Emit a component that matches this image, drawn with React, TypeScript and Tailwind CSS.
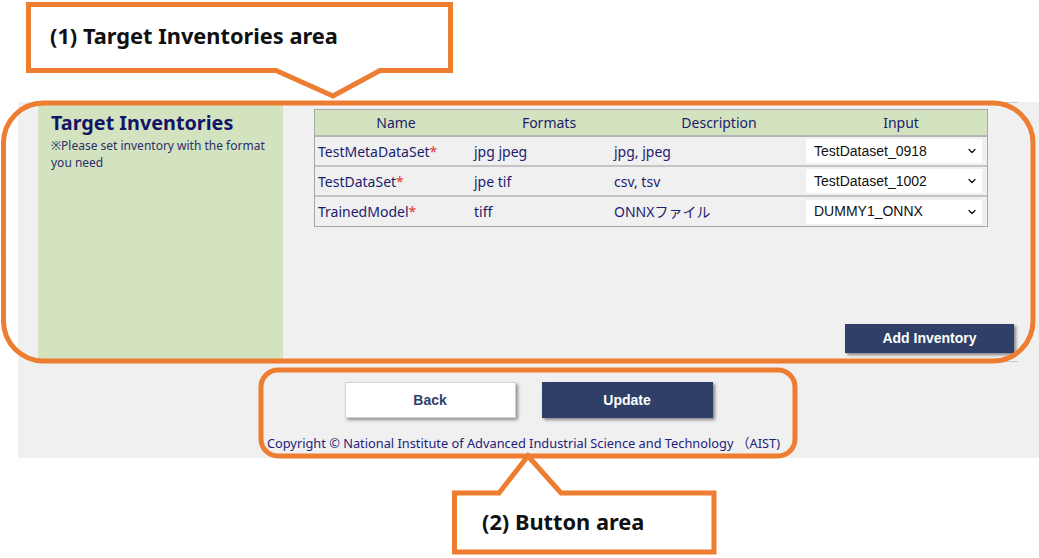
import { ChevronDown } from "lucide-react";

type Inventory = {
  name: string;
  formats: string;
  description: string;
  input: string;
};

const inventories: Inventory[] = [
  { name: "TestMetaDataSet", formats: "jpg jpeg", description: "jpg, jpeg", input: "TestDataset_0918" },
  { name: "TestDataSet", formats: "jpe tif", description: "csv, tsv", input: "TestDataset_1002" },
  { name: "TrainedModel", formats: "tiff", description: "ONNXファイル", input: "DUMMY1_ONNX" },
];

const ORANGE = "#ed7d31";

function Annotations() {
  return (
    <>
      <svg className="absolute inset-0 pointer-events-none" width="1039" height="558" viewBox="0 0 1039 558">
        <path
          d="M28.5 4.5 H450.5 V70.5 H380 L333 96 L276 70.5 H28.5 Z"
          fill="#ffffff"
          stroke={ORANGE}
          strokeWidth="5"
        />
        <rect x="3.5" y="103" width="1029.5" height="258" rx="40" fill="none" stroke={ORANGE} strokeWidth="5" />
        <rect x="261" y="370" width="534" height="86" rx="17" fill="none" stroke={ORANGE} strokeWidth="5" />
        <path
          d="M454.5 493 H499 L528 456 L561 493 H714 V552 H454.5 Z"
          fill="#ffffff"
          stroke={ORANGE}
          strokeWidth="5"
        />
      </svg>
      <div className="absolute left-[50px] top-[21px] text-[21.8px] font-bold leading-[30px] text-[#111] font-['Noto_Sans',sans-serif]">
        (1) Target Inventories area
      </div>
      <div className="absolute left-[482px] top-[507px] text-[21.8px] font-bold leading-[30px] text-[#111] font-['Noto_Sans',sans-serif]">
        (2) Button area
      </div>
    </>
  );
}

function InventoryTable() {
  return (
    <div className="w-[674px] border border-[#a8a8a8] text-[14px] text-[#1c1c6e]">
      <div className="grid grid-cols-[156px_140px_192px_184px] h-[27px] items-center bg-[#d3e3c0] border-b-2 border-[#b4b4b4]">
        <div className="text-center pl-[6px]">Name</div>
        <div className="text-center pl-[16px]">Formats</div>
        <div className="text-center pl-[24px]">Description</div>
        <div className="text-center pl-[12px]">Input</div>
      </div>
      {inventories.map((inv, i) => (
        <div
          key={inv.name}
          className={
            i < inventories.length - 1
              ? "grid grid-cols-[156px_140px_192px_184px] h-[30px] items-center border-b-2 border-[#c4c4c4]"
              : "grid grid-cols-[156px_140px_192px_184px] h-[29px] items-center"
          }
        >
          <div className="pl-[3px]">
            {inv.name}
            <span className="text-[#e53935]">*</span>
          </div>
          <div className="pl-[3px]">{inv.formats}</div>
          <div className="pl-[3px] font-['Noto_Sans','Noto_Sans_CJK_JP',sans-serif]">{inv.description}</div>
          <div className="pl-[3px] pr-[5px]">
            <div className="flex items-center justify-between h-[24px] bg-white pl-[8px] pr-[4px] font-['Liberation_Sans',sans-serif] text-[14px] text-[#111]">
              <span>{inv.input}</span>
              <ChevronDown className="w-[12px] h-[12px]" strokeWidth={2.5} />
            </div>
          </div>
        </div>
      ))}
    </div>
  );
}

export default function App() {
  return (
    <div className="relative w-[1039px] h-[558px] bg-white overflow-hidden font-['Noto_Sans','Noto_Sans_CJK_JP',sans-serif]">
      <div className="h-[102px]" />
      <div className="ml-[18px] h-[356px] bg-[#f0f0f0] flex flex-col">
        <div className="ml-[20px] w-[980px] h-[260px] border-y border-[#c8c8c8] flex">
          <div className="w-[245px] h-[256px] bg-[#d3e3c0] px-[13px] pt-[7px]">
            <h1 className="text-[19.8px] font-bold leading-[26px] text-[#141466]">Target Inventories</h1>
            <p className="mt-[1px] text-[12px] leading-[17px] text-[#2d2d6b]">
              ※Please set inventory with the format you need
            </p>
          </div>
          <div className="flex-1 flex flex-col pl-[31px] pt-[6px] pb-[8px] pr-[4px]">
            <InventoryTable />
            <button className="mt-auto self-end w-[169px] h-[29px] bg-[#2f3f68] text-white font-bold text-[14px] font-['Liberation_Sans',sans-serif] shadow-[2px_2px_3px_rgba(0,0,0,0.45)]">
              Add Inventory
            </button>
          </div>
        </div>
        <div className="mt-[20px] flex justify-center gap-[26px]">
          <button className="w-[171px] h-[36px] bg-white border border-[#d4d4d4] text-[#2f3f68] font-bold text-[14px] font-['Liberation_Sans',sans-serif] shadow-[2px_2px_3px_rgba(0,0,0,0.4)]">
            Back
          </button>
          <button className="w-[171px] h-[36px] bg-[#2f3f68] text-white font-bold text-[14px] font-['Liberation_Sans',sans-serif] shadow-[2px_2px_3px_rgba(0,0,0,0.45)]">
            Update
          </button>
        </div>
        <p className="mt-[17px] text-center pr-[10px] text-[12.8px] leading-[17px] text-[#23237a]">
          Copyright © National Institute of Advanced Industrial Science and Technology （AIST)
        </p>
      </div>
      <Annotations />
    </div>
  );
}
